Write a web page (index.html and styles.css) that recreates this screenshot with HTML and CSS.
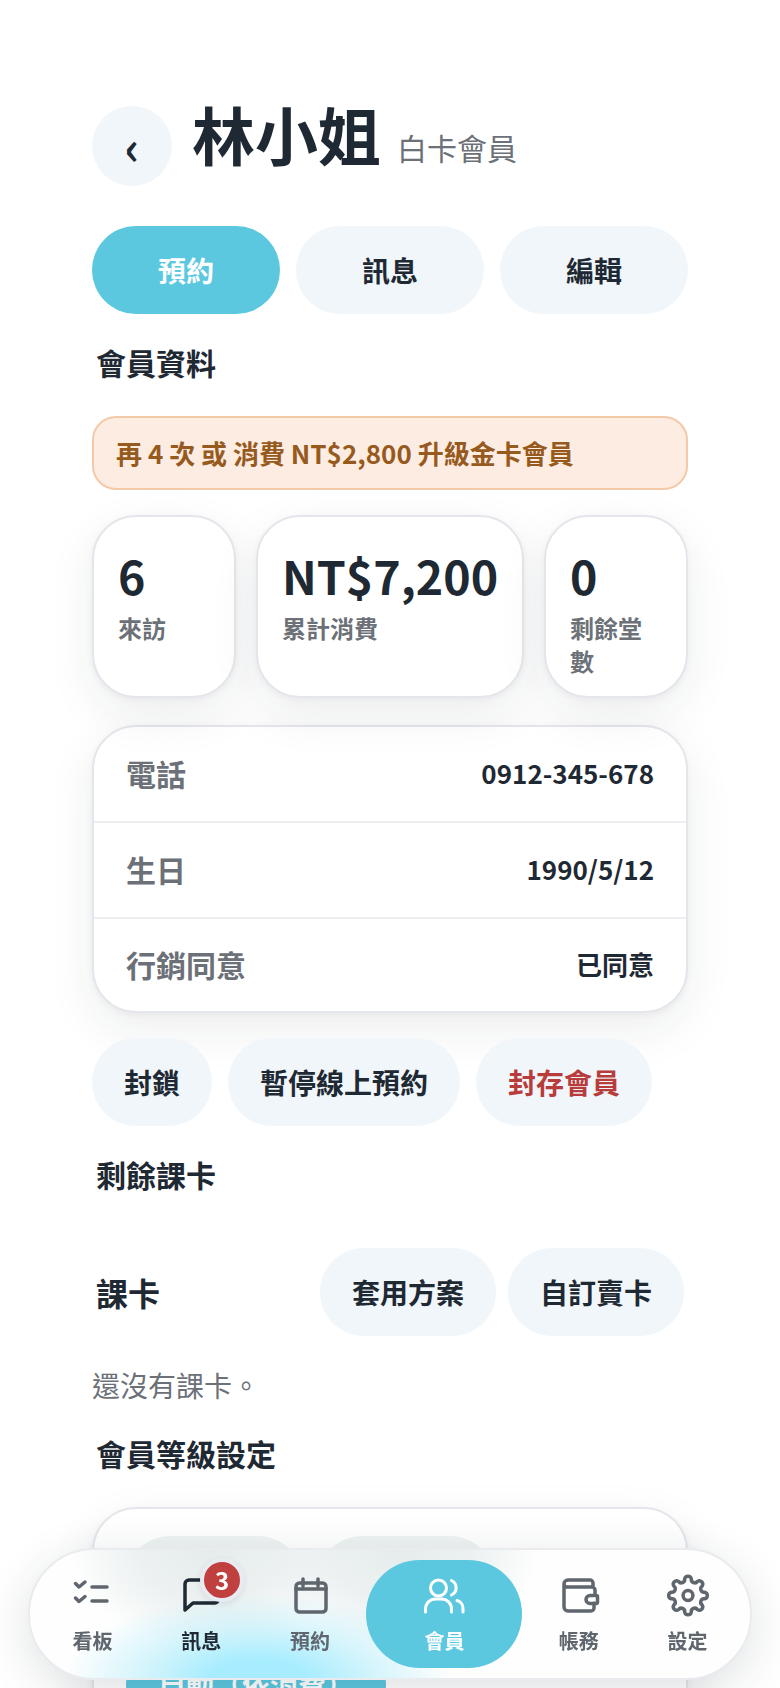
FILE: index.html
```html
<!DOCTYPE html>
<html lang="zh-Hant">
<head>
<meta charset="utf-8">
<title>會員</title>
<link rel="stylesheet" href="styles.css">
</head>
<body>
<div class="page">
  <header class="head">
    <button class="back">‹</button>
    <h1 class="name">林小姐</h1>
    <span class="tier">白卡會員</span>
  </header>
  <div class="tabs">
    <button class="btn primary">預約</button>
    <button class="btn">訊息</button>
    <button class="btn">編輯</button>
  </div>
  <h2 class="sec">會員資料</h2>
  <div class="alert">再 4 次 或 消費 NT$2,800 升級金卡會員</div>
  <div class="stats">
    <div class="stat"><div class="val">6</div><div class="lab">來訪</div></div>
    <div class="stat"><div class="val">NT$7,200</div><div class="lab">累計消費</div></div>
    <div class="stat"><div class="val">0</div><div class="lab">剩餘堂數</div></div>
  </div>
  <div class="card details">
    <div class="row"><span class="k">電話</span><span class="v">0912-345-678</span></div>
    <div class="row"><span class="k">生日</span><span class="v">1990/5/12</span></div>
    <div class="row"><span class="k">行銷同意</span><span class="v">已同意</span></div>
  </div>
  <div class="actions">
    <button class="btn">封鎖</button>
    <button class="btn">暫停線上預約</button>
    <button class="btn danger">封存會員</button>
  </div>
  <h2 class="sec">剩餘課卡</h2>
  <div class="cardhead">
    <span class="cardtitle">課卡</span>
    <div class="cardbtns">
      <button class="btn">套用方案</button>
      <button class="btn">自訂賣卡</button>
    </div>
  </div>
  <p class="empty">還沒有課卡。</p>
  <h2 class="sec">會員等級設定</h2>
  <div class="card level">
    <div class="chips">
      <span class="chip"></span>
      <span class="chip"></span>
    </div>
    <button class="btn primary auto">自動（依消費）</button>
  </div>
</div>

<nav class="nav">
  <a class="item">
    <svg class="ico" viewBox="0 0 48 48"><path d="M7.500 11.500l3.500 3.500 6-5M7.500 26l3.500 3.500 6-5M24 15h15M24 29h15"/></svg>
    <span>看板</span>
  </a>
  <a class="item strong">
    <svg class="ico" viewBox="0 0 48 48"><path d="M8 38V12a4 4 0 0 1 4-4h26a3 3 0 0 1 3 3v17a3 3 0 0 1-3 3H16z"/></svg>
    <span>訊息</span>
    <b class="badge">3</b>
  </a>
  <a class="item">
    <svg class="ico" viewBox="0 0 48 48"><rect x="10" y="11" width="30" height="29" rx="3.500"/><path d="M10 17h30M17 7v7M32 7v7"/></svg>
    <span>預約</span>
  </a>
  <a class="item active">
    <svg class="ico thin" viewBox="0 0 48 48"><circle cx="18.500" cy="16" r="8"/><path d="M5.500 40v-3a10 10 0 0 1 10-10h6a10 10 0 0 1 10 10v3M31.500 8.500a8 8 0 0 1 0 14.500M37 28.500a8 8 0 0 1 6 8V40"/></svg>
    <span>會員</span>
  </a>
  <a class="item">
    <svg class="ico" viewBox="0 0 48 48"><path d="M38 15v-4a3 3 0 0 0-3-3H13a4 4 0 0 0-4 4v23a4 4 0 0 0 4 4h23a3 3 0 0 0 3-3v-5M9 12a3 3 0 0 0 3 3h25a3 3 0 0 1 3 3v5.500M35 23.500h6a1.500 1.500 0 0 1 1.500 1.500v5a1.500 1.500 0 0 1-1.500 1.500h-6a4 4 0 0 1 0-8z"/></svg>
    <span>帳務</span>
  </a>
  <a class="item">
    <svg class="ico" viewBox="0 0 48 48"><path d="M20.680 6.830A3.400 3.400 0 0 1 27.320 6.830A3.400 3.400 0 0 0 33.440 9.360A3.400 3.400 0 0 1 38.140 14.060A3.400 3.400 0 0 0 40.670 20.180A3.400 3.400 0 0 1 40.670 26.820A3.400 3.400 0 0 0 38.140 32.940A3.400 3.400 0 0 1 33.440 37.640A3.400 3.400 0 0 0 27.320 40.170A3.400 3.400 0 0 1 20.680 40.170A3.400 3.400 0 0 0 14.560 37.640A3.400 3.400 0 0 1 9.860 32.940A3.400 3.400 0 0 0 7.330 26.820A3.400 3.400 0 0 1 7.330 20.180A3.400 3.400 0 0 0 9.860 14.060A3.400 3.400 0 0 1 14.560 9.360A3.400 3.400 0 0 0 20.680 6.830Z"/><circle cx="24" cy="23.500" r="4.900"/></svg>
    <span>設定</span>
  </a>
</nav>
</body>
</html>
```

FILE: styles.css
```css
* { box-sizing: border-box; }
html, body { margin: 0; padding: 0; background: #fff; }
body {
  height: 1688px;
  overflow: hidden;
  font-family: "Noto Sans CJK TC", "Noto Sans", sans-serif;
  color: #1f2933;
}
.page { padding: 106px 92px 0; width: 780px; }
button { font-family: inherit; border: 0; margin: 0; }

.head { display: flex; align-items: baseline; height: 80px; }
.back {
  width: 80px; height: 80px; border-radius: 50%;
  background: #f0f6fa; color: #1f2933;
  font-size: 46px; font-weight: 700; line-height: 1; padding: 0 0 2px;
  align-self: center; flex: none;
}
.name { font-size: 63px; font-weight: 700; line-height: 1; margin: -5px 0 0 20px; }
.tier { font-size: 30px; font-weight: 400; color: #6c7178; margin-left: 16px; }

.btn {
  height: 88px; padding: 0 32px; border-radius: 44px;
  background: #f0f6fa; color: #1f2933;
  font-size: 28px; font-weight: 700; white-space: nowrap;
}
.btn.primary { background: #5bc8df; color: #fff; }
.btn.danger { color: #b83c3c; }

.tabs { display: flex; gap: 16px; margin-top: 40px; }
.tabs .btn { flex: 1; }

.sec { font-size: 30px; font-weight: 700; line-height: 44px; margin: 26px 4px 0; }

.alert {
  margin-top: 32px; height: 74px; padding: 0 22px 2px;
  display: flex; align-items: center;
  background: #fdece1; border: 2px solid #f3c9a8; border-radius: 24px;
  color: #965a1e; font-size: 26px; font-weight: 700;
}

.stats { display: flex; gap: 20px; margin-top: 25px; }
.stat {
  flex: 1 1 0; padding: 26px 24px 19px;
  background: #fff; border: 2px solid #e4e6ec; border-radius: 44px;
  box-shadow: 0 16px 48px rgba(31, 41, 51, .08), 0 2px 6px rgba(31, 41, 51, .05);
}
.val { font-size: 46.500px; font-weight: 700; line-height: 64px; white-space: nowrap; }
.lab { font-size: 24px; font-weight: 700; line-height: 33px; color: #6c7178; margin-top: 4px; }

.card {
  background: #fff; border: 2px solid #e4e6ec; border-radius: 44px;
  box-shadow: 0 16px 48px rgba(31, 41, 51, .08), 0 2px 6px rgba(31, 41, 51, .05);
}
.details { margin-top: 27px; overflow: hidden; }
.row {
  height: 96px; padding: 0 32px 3px;
  display: flex; align-items: center; justify-content: space-between;
  border-top: 2px solid #eceef1;
}
.row:first-child { border-top: 0; height: 94px; }
.row:last-child { height: 94px; }
.k { font-size: 30px; font-weight: 700; color: #6c7178; }
.v { font-size: 26px; font-weight: 700; }

.actions { display: flex; gap: 16px; margin-top: 25px; }

.cardhead {
  display: flex; align-items: center; justify-content: space-between;
  margin-top: 52px; padding: 0 4px;
}
.cardtitle { font-size: 32px; font-weight: 700; }
.cardbtns { display: flex; gap: 12px; }

.empty { margin: 29px 0 0; font-size: 28px; line-height: 40px; color: #6c7178; }

.level { margin-top: 32px; padding: 27px 32px; height: 400px; }
.chips { display: flex; gap: 16px; }
.chip { width: 176px; height: 88px; border-radius: 44px; background: #eef3f3; }
.auto { display: block; margin-top: 16px; }

.nav {
  position: fixed; left: 28px; top: 1548px; width: 724px; height: 132px;
  display: flex; gap: 4px; padding: 10px;
  border: 2px solid #e9ebee; border-radius: 66px;
  background-color: #fefefe;
  background-image:
    radial-gradient(195px 88px at 228px 132px, #a6ecff 0%, #a8edff 26%, rgba(184, 238, 250, .6) 60%, rgba(205, 240, 248, 0) 100%),
    radial-gradient(140px 100px at 180px 0, #e6ecec 0%, rgba(230, 236, 236, .75) 50%, rgba(230, 236, 236, 0) 100%),
    radial-gradient(140px 100px at 370px 0, #e6ecec 0%, rgba(230, 236, 236, .75) 50%, rgba(230, 236, 236, 0) 100%);
  box-shadow: 0 12px 48px rgba(31, 41, 51, .14);
}
.item {
  position: relative; flex: 1 1 0;
  display: flex; flex-direction: column; align-items: center;
  padding-top: 12px; gap: 6px;
  color: #5f666e; font-size: 20px; font-weight: 700; line-height: 30px;
  border-radius: 54px;
}
.ico {
  width: 48px; height: 48px; fill: none; stroke: currentColor;
  stroke-width: 3.500; stroke-linecap: round; stroke-linejoin: round;
}
.thin { stroke-width: 3; }
.strong { color: #1f2933; }
.active { flex: 0 0 156px; background: #5bc8df; color: #fff; }
.badge {
  position: absolute; left: 50%; top: -2px; margin-left: -1px;
  width: 44px; height: 44px;
  display: flex; align-items: center; justify-content: center;
  background: #c04040; color: #fff; border: 4px solid #e8ebf2; border-radius: 50%;
  font-size: 24px; font-weight: 700; line-height: 1;
  box-shadow: 0 2px 6px rgba(31, 41, 51, .1);
}
```
